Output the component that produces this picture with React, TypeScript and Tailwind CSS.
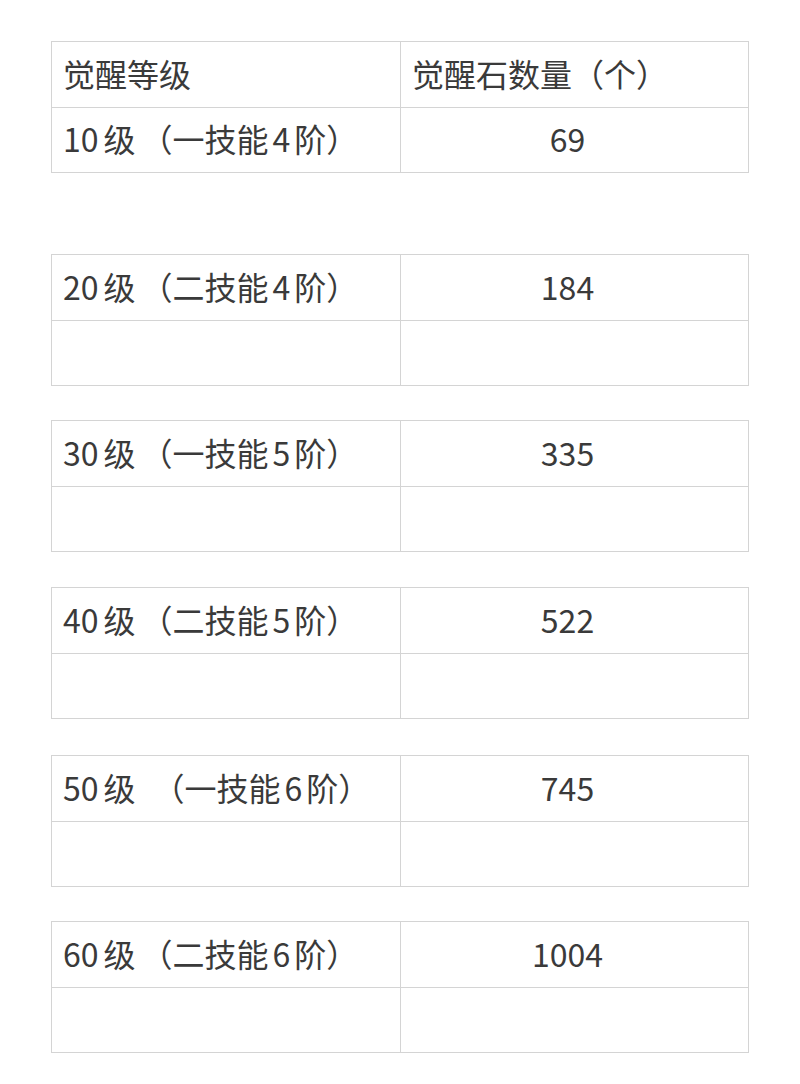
import React from 'react';

type Block = {
  rows: [React.ReactNode, string][];
  gap: string;
};

// level label like "10级（一技能4阶）" with a little breathing room round the digits
const Label: React.FC<{ lv: string; skill: string; step: string; wide?: boolean }> = ({ lv, skill, step, wide }) => (
  <span>
    <span className="mr-[5px]">{lv}</span>级{wide && <span className="inline-block w-[12px]" />}
    <span className="ml-[5px]">（</span>
    {skill}技能
    <span className="mx-[4px]">{step}</span>阶）
  </span>
);

const blocks: Block[] = [
  {
    rows: [
      ['觉醒等级', '觉醒石数量（个）'],
      [<Label lv="10" skill="一" step="4" />, '69'],
    ],
    gap: 'mt-0',
  },
  { rows: [[<Label lv="20" skill="二" step="4" />, '184'], ['', '']], gap: 'mt-[81px]' },
  { rows: [[<Label lv="30" skill="一" step="5" />, '335'], ['', '']], gap: 'mt-[34px]' },
  { rows: [[<Label lv="40" skill="二" step="5" />, '522'], ['', '']], gap: 'mt-[35px]' },
  { rows: [[<Label lv="50" skill="一" step="6" wide />, '745'], ['', '']], gap: 'mt-[36px]' },
  { rows: [[<Label lv="60" skill="二" step="6" />, '1004'], ['', '']], gap: 'mt-[34px]' },
];

export default function App() {
  return (
    <div
      className="min-h-screen bg-white pt-[41px] pl-[51px] text-[#3a3a3a]"
      style={{ fontFamily: '"Noto Sans CJK SC", "Noto Sans", sans-serif' }}
    >
      <div className="w-[698px]">
        {blocks.map((b, i) => (
          <div key={i} className={`${b.gap} border border-[#d4d4d4]`}>
            {b.rows.map(([left, right], j) => (
              <div
                key={j}
                className={`grid grid-cols-[349px_1fr] ${j === 0 ? 'h-[66px] border-b border-[#d4d4d4]' : 'h-[64px]'}`}
              >
                <div className="flex items-center border-r border-[#d4d4d4] pl-[11px] pb-[4px] text-[32px] leading-none">
                  {left}
                </div>
                <div
                  className={`flex items-center pb-[4px] text-[32px] leading-none ${
                    i === 0 && j === 0 ? 'pl-[11px]' : 'justify-center pr-[14px]'
                  }`}
                >
                  {right}
                </div>
              </div>
            ))}
          </div>
        ))}
      </div>
    </div>
  );
}
